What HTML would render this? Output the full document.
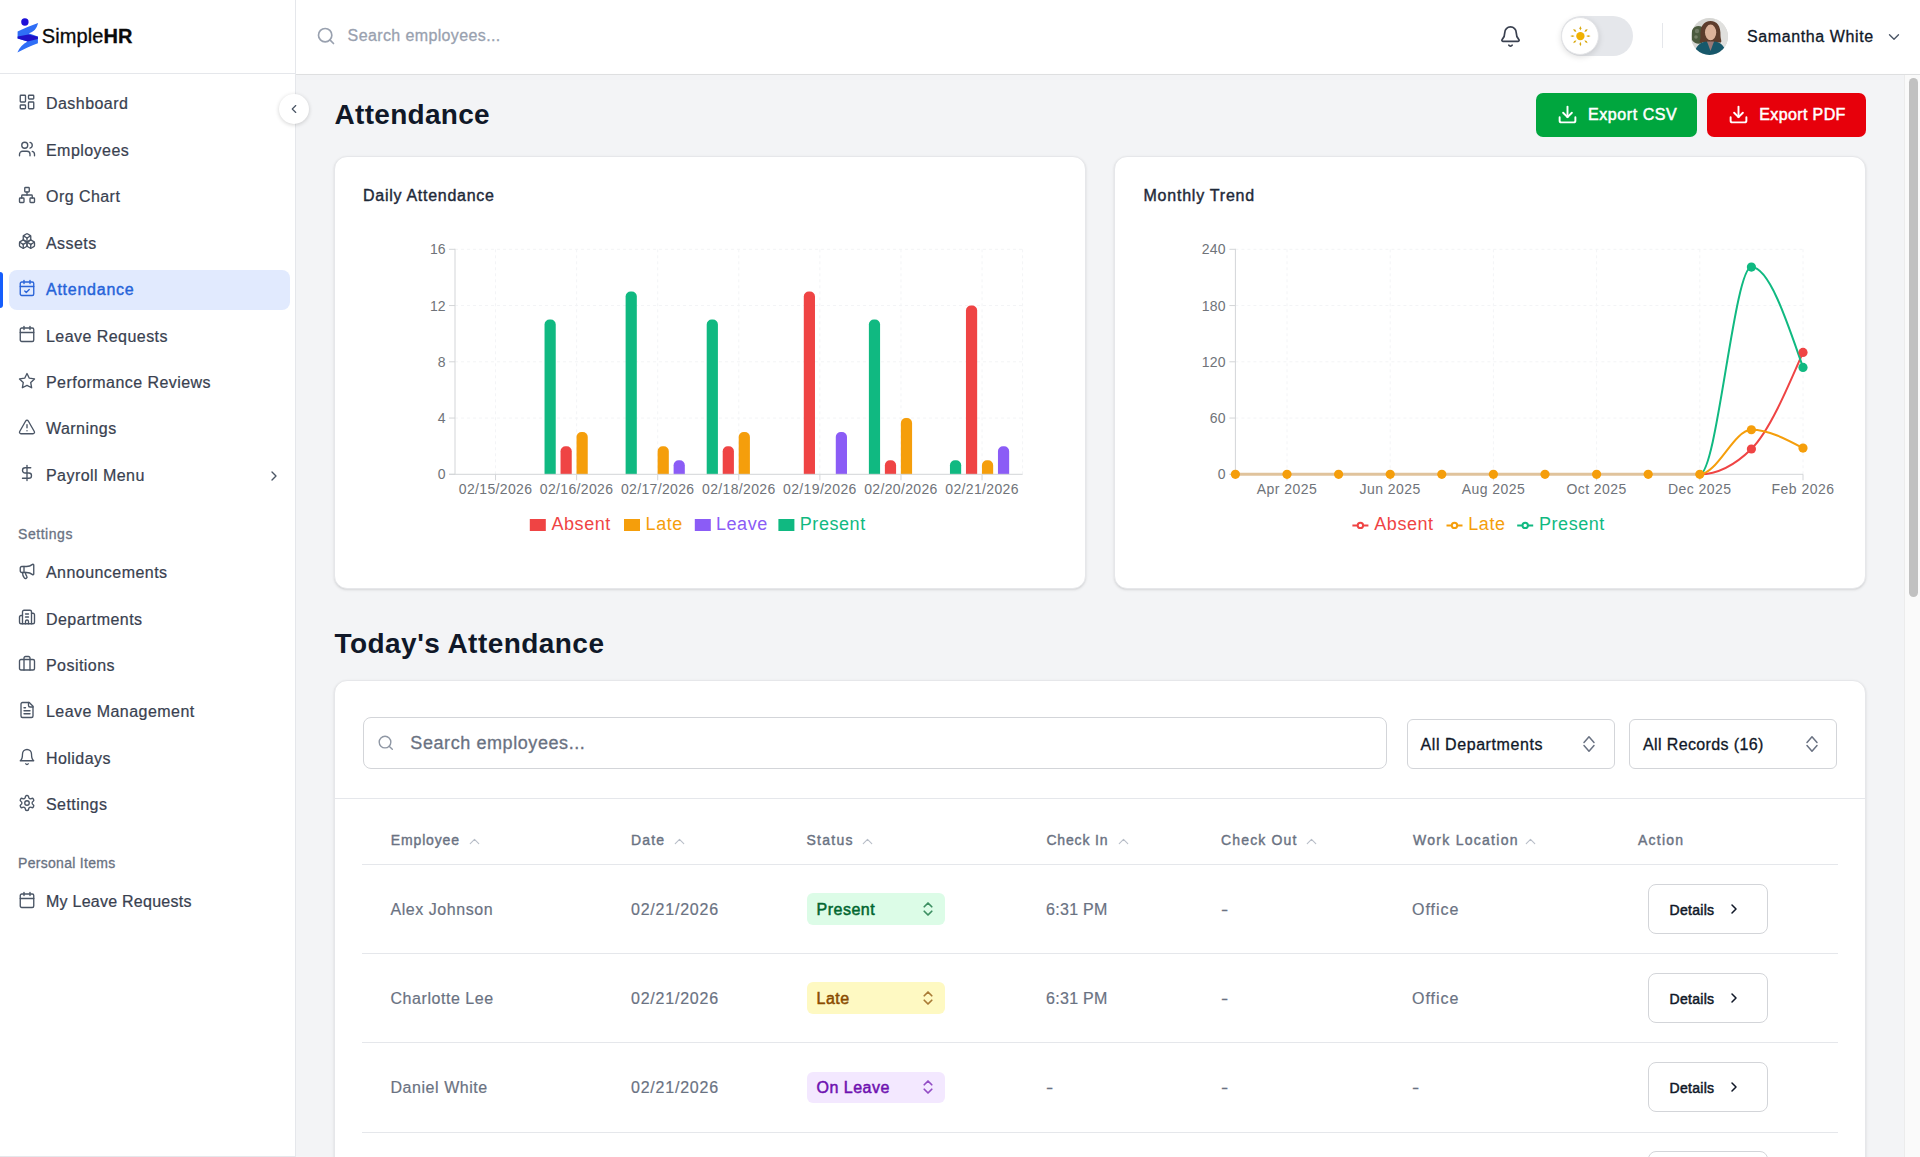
<!DOCTYPE html>
<html><head><meta charset="utf-8"><title>Attendance - SimpleHR</title>
<style>
html,body{margin:0;padding:0;width:1920px;height:1157px;overflow:hidden;background:#f3f4f6;}
body{position:relative;font-family:"Liberation Sans", sans-serif;}
.t{position:absolute;white-space:nowrap;-webkit-text-stroke:0.3px currentColor;}
svg{overflow:visible;}
</style></head><body>
<div style="position:absolute;left:0px;top:0px;width:295px;height:1157px;background:#fff;"></div>
<div style="position:absolute;left:295px;top:0px;width:1px;height:1157px;background:#e5e7eb;"></div>
<div style="position:absolute;left:0px;top:73px;width:295px;height:1px;background:#e5e7eb;"></div>
<div style="position:absolute;left:0px;top:1156px;width:295px;height:1px;background:#e5e7eb;"></div>
<svg style="position:absolute;left:0;top:0" width="50" height="60" viewBox="0 0 50 60">
<circle cx="24.9" cy="22" r="3.7" fill="#1d0fd8"/>
<path d="M17.6,31.5 C24,28.5 31,25.2 38.1,22.9 C36.6,28.8 33.6,32 28.7,33.2 L37.9,36.6 L37.9,43.2 C31,46 24,48.8 17.4,52.6 C19.5,47.5 23,43.8 27.6,41.5 L17.6,38.6 Z" fill="#2f6ef6"/>
<path d="M17.6,36.6 L28.6,34.4 L37.9,36.8 L37.9,38.9 L27.6,41.5 L17.6,38.6 Z" fill="#1f12c8"/>
</svg>
<div class="t" style="left:41.80px;top:26.27px;font-size:20px;line-height:20px;font-weight:400;color:#0a0a0a;letter-spacing:0.100px;">Simple<b style="font-weight:700">HR</b></div>
<div style="position:absolute;left:9px;top:269.5px;width:281px;height:40.5px;background:#e1eafe;border-radius:8px;"></div>
<div style="position:absolute;left:0px;top:272px;width:3px;height:36px;background:#155dfc;border-radius:0 4px 4px 0;"></div>
<svg style="position:absolute;left:17.6px;top:93.1px;" width="18" height="18" viewBox="0 0 24 24" fill="none" stroke="#4a5565" stroke-width="1.8" stroke-linecap="round" stroke-linejoin="round"><rect width="7" height="9" x="3" y="3" rx="1"/><rect width="7" height="5" x="14" y="3" rx="1"/><rect width="7" height="9" x="14" y="12" rx="1"/><rect width="7" height="5" x="3" y="16" rx="1"/></svg>
<div class="t" style="left:46.00px;top:96.46px;font-size:16px;line-height:16px;font-weight:400;color:#394150;letter-spacing:0.450px;-webkit-text-stroke:0.22px currentColor;">Dashboard</div>
<svg style="position:absolute;left:17.6px;top:139.51px;" width="18" height="18" viewBox="0 0 24 24" fill="none" stroke="#4a5565" stroke-width="1.8" stroke-linecap="round" stroke-linejoin="round"><path d="M16 21v-2a4 4 0 0 0-4-4H6a4 4 0 0 0-4 4v2"/><circle cx="9" cy="7" r="4"/><path d="M22 21v-2a4 4 0 0 0-3-3.87"/><path d="M16 3.13a4 4 0 0 1 0 7.75"/></svg>
<div class="t" style="left:46.00px;top:142.87px;font-size:16px;line-height:16px;font-weight:400;color:#394150;letter-spacing:0.450px;-webkit-text-stroke:0.22px currentColor;">Employees</div>
<svg style="position:absolute;left:17.6px;top:185.92px;" width="18" height="18" viewBox="0 0 24 24" fill="none" stroke="#4a5565" stroke-width="1.8" stroke-linecap="round" stroke-linejoin="round"><rect x="16" y="16" width="6" height="6" rx="1"/><rect x="2" y="16" width="6" height="6" rx="1"/><rect x="9" y="2" width="6" height="6" rx="1"/><path d="M5 16v-3a1 1 0 0 1 1-1h12a1 1 0 0 1 1 1v3"/><path d="M12 12V8"/></svg>
<div class="t" style="left:46.00px;top:189.28px;font-size:16px;line-height:16px;font-weight:400;color:#394150;letter-spacing:0.450px;-webkit-text-stroke:0.22px currentColor;">Org Chart</div>
<svg style="position:absolute;left:17.6px;top:232.32999999999998px;" width="18" height="18" viewBox="0 0 24 24" fill="none" stroke="#4a5565" stroke-width="1.8" stroke-linecap="round" stroke-linejoin="round"><path d="M2.97 12.92A2 2 0 0 0 2 14.63v3.24a2 2 0 0 0 .97 1.71l3 1.8a2 2 0 0 0 2.06 0L12 19v-5.5l-5-3-4.03 2.42Z"/><path d="m7 16.5-4.74-2.85"/><path d="m7 16.5 5-3"/><path d="M7 16.5v5.17"/><path d="M12 13.5V19l3.97 2.38a2 2 0 0 0 2.06 0l3-1.8a2 2 0 0 0 .97-1.71v-3.24a2 2 0 0 0-.97-1.71L17 10.5l-5 3Z"/><path d="m17 16.5-5-3"/><path d="m17 16.5 4.74-2.85"/><path d="M17 16.5v5.17"/><path d="M7.97 4.42A2 2 0 0 0 7 6.13v4.37l5 3 5-3V6.13a2 2 0 0 0-.97-1.71l-3-1.8a2 2 0 0 0-2.06 0l-3 1.8Z"/><path d="M12 8 7.26 5.15"/><path d="m12 8 4.74-2.85"/><path d="M12 13.5V8"/></svg>
<div class="t" style="left:46.00px;top:235.69px;font-size:16px;line-height:16px;font-weight:400;color:#394150;letter-spacing:0.450px;-webkit-text-stroke:0.22px currentColor;">Assets</div>
<svg style="position:absolute;left:17.6px;top:278.74px;" width="18" height="18" viewBox="0 0 24 24" fill="none" stroke="#2a64d8" stroke-width="1.8" stroke-linecap="round" stroke-linejoin="round"><path d="M8 2v4"/><path d="M16 2v4"/><rect width="18" height="18" x="3" y="4" rx="2"/><path d="M3 10h18"/><path d="m9 16 2 2 4-4"/></svg>
<div class="t" style="left:46.00px;top:282.10px;font-size:16px;line-height:16px;font-weight:400;color:#2563d9;letter-spacing:0.750px;-webkit-text-stroke:0.5px currentColor;-webkit-text-stroke:0.4px currentColor;">Attendance</div>
<svg style="position:absolute;left:17.6px;top:325.15px;" width="18" height="18" viewBox="0 0 24 24" fill="none" stroke="#4a5565" stroke-width="1.8" stroke-linecap="round" stroke-linejoin="round"><path d="M8 2v4"/><path d="M16 2v4"/><rect width="18" height="18" x="3" y="4" rx="2"/><path d="M3 10h18"/></svg>
<div class="t" style="left:46.00px;top:328.51px;font-size:16px;line-height:16px;font-weight:400;color:#394150;letter-spacing:0.450px;-webkit-text-stroke:0.22px currentColor;">Leave Requests</div>
<svg style="position:absolute;left:17.6px;top:371.56px;" width="18" height="18" viewBox="0 0 24 24" fill="none" stroke="#4a5565" stroke-width="1.8" stroke-linecap="round" stroke-linejoin="round"><polygon points="12 2 15.09 8.26 22 9.27 17 14.14 18.18 21.02 12 17.77 5.82 21.02 7 14.14 2 9.27 8.91 8.26 12 2"/></svg>
<div class="t" style="left:46.00px;top:374.92px;font-size:16px;line-height:16px;font-weight:400;color:#394150;letter-spacing:0.450px;-webkit-text-stroke:0.22px currentColor;">Performance Reviews</div>
<svg style="position:absolute;left:17.6px;top:417.97px;" width="18" height="18" viewBox="0 0 24 24" fill="none" stroke="#4a5565" stroke-width="1.8" stroke-linecap="round" stroke-linejoin="round"><path d="m21.73 18-8-14a2 2 0 0 0-3.48 0l-8 14A2 2 0 0 0 4 21h16a2 2 0 0 0 1.73-3"/><path d="M12 9v4"/><path d="M12 17h.01"/></svg>
<div class="t" style="left:46.00px;top:421.33px;font-size:16px;line-height:16px;font-weight:400;color:#394150;letter-spacing:0.450px;-webkit-text-stroke:0.22px currentColor;">Warnings</div>
<svg style="position:absolute;left:17.6px;top:464.38px;" width="18" height="18" viewBox="0 0 24 24" fill="none" stroke="#4a5565" stroke-width="1.8" stroke-linecap="round" stroke-linejoin="round"><line x1="12" x2="12" y1="2" y2="22"/><path d="M17 5H9.5a3.5 3.5 0 0 0 0 7h5a3.5 3.5 0 0 1 0 7H6"/></svg>
<div class="t" style="left:46.00px;top:467.74px;font-size:16px;line-height:16px;font-weight:400;color:#394150;letter-spacing:0.450px;-webkit-text-stroke:0.22px currentColor;">Payroll Menu</div>
<svg style="position:absolute;left:266px;top:468px;" width="16" height="16" viewBox="0 0 24 24" fill="none" stroke="#4a5565" stroke-width="2" stroke-linecap="round" stroke-linejoin="round"><path d="m9 18 6-6-6-6"/></svg>
<div class="t" style="left:18.00px;top:526.75px;font-size:14px;line-height:14px;font-weight:400;color:#6a7282;letter-spacing:0.550px;">Settings</div>
<svg style="position:absolute;left:17.6px;top:561.9px;" width="18" height="18" viewBox="0 0 24 24" fill="none" stroke="#4a5565" stroke-width="1.8" stroke-linecap="round" stroke-linejoin="round"><path d="M11 6a13 13 0 0 0 8.4-2.8A1 1 0 0 1 21 4v12a1 1 0 0 1-1.6.8A13 13 0 0 0 11 14H5a2 2 0 0 1-2-2V8a2 2 0 0 1 2-2z"/><path d="M6 14a12 12 0 0 0 2.4 7.2 2 2 0 0 0 3.2-2.4A8 8 0 0 1 10 14"/><path d="M8 6v8"/></svg>
<div class="t" style="left:46.00px;top:565.26px;font-size:16px;line-height:16px;font-weight:400;color:#394150;letter-spacing:0.450px;-webkit-text-stroke:0.22px currentColor;">Announcements</div>
<svg style="position:absolute;left:17.6px;top:608.3px;" width="18" height="18" viewBox="0 0 24 24" fill="none" stroke="#4a5565" stroke-width="1.8" stroke-linecap="round" stroke-linejoin="round"><path d="M10 12h4"/><path d="M10 8h4"/><path d="M14 21v-3a2 2 0 0 0-4 0v3"/><path d="M6 10H4a2 2 0 0 0-2 2v7a2 2 0 0 0 2 2h16a2 2 0 0 0 2-2V9a2 2 0 0 0-2-2h-2"/><path d="M6 21V5a2 2 0 0 1 2-2h8a2 2 0 0 1 2 2v16"/></svg>
<div class="t" style="left:46.00px;top:611.66px;font-size:16px;line-height:16px;font-weight:400;color:#394150;letter-spacing:0.450px;-webkit-text-stroke:0.22px currentColor;">Departments</div>
<svg style="position:absolute;left:17.6px;top:654.6999999999999px;" width="18" height="18" viewBox="0 0 24 24" fill="none" stroke="#4a5565" stroke-width="1.8" stroke-linecap="round" stroke-linejoin="round"><path d="M16 20V4a2 2 0 0 0-2-2h-4a2 2 0 0 0-2 2v16"/><rect width="20" height="14" x="2" y="6" rx="2"/></svg>
<div class="t" style="left:46.00px;top:658.06px;font-size:16px;line-height:16px;font-weight:400;color:#394150;letter-spacing:0.450px;-webkit-text-stroke:0.22px currentColor;">Positions</div>
<svg style="position:absolute;left:17.6px;top:701.1px;" width="18" height="18" viewBox="0 0 24 24" fill="none" stroke="#4a5565" stroke-width="1.8" stroke-linecap="round" stroke-linejoin="round"><path d="M15 2H6a2 2 0 0 0-2 2v16a2 2 0 0 0 2 2h12a2 2 0 0 0 2-2V7Z"/><path d="M14 2v4a2 2 0 0 0 2 2h4"/><path d="M10 9H8"/><path d="M16 13H8"/><path d="M16 17H8"/></svg>
<div class="t" style="left:46.00px;top:704.46px;font-size:16px;line-height:16px;font-weight:400;color:#394150;letter-spacing:0.450px;-webkit-text-stroke:0.22px currentColor;">Leave Management</div>
<svg style="position:absolute;left:17.6px;top:747.5px;" width="18" height="18" viewBox="0 0 24 24" fill="none" stroke="#4a5565" stroke-width="1.8" stroke-linecap="round" stroke-linejoin="round"><path d="M6 8a6 6 0 0 1 12 0c0 7 3 9 3 9H3s3-2 3-9"/><path d="M10.3 21a1.94 1.94 0 0 0 3.4 0"/></svg>
<div class="t" style="left:46.00px;top:750.86px;font-size:16px;line-height:16px;font-weight:400;color:#394150;letter-spacing:0.450px;-webkit-text-stroke:0.22px currentColor;">Holidays</div>
<svg style="position:absolute;left:17.6px;top:793.9px;" width="18" height="18" viewBox="0 0 24 24" fill="none" stroke="#4a5565" stroke-width="1.8" stroke-linecap="round" stroke-linejoin="round"><path d="M12.22 2h-.44a2 2 0 0 0-2 2v.18a2 2 0 0 1-1 1.73l-.43.25a2 2 0 0 1-2 0l-.15-.08a2 2 0 0 0-2.73.73l-.22.38a2 2 0 0 0 .73 2.73l.15.1a2 2 0 0 1 1 1.72v.51a2 2 0 0 1-1 1.74l-.15.09a2 2 0 0 0-.73 2.73l.22.38a2 2 0 0 0 2.73.73l.15-.08a2 2 0 0 1 2 0l.43.25a2 2 0 0 1 1 1.73V20a2 2 0 0 0 2 2h.44a2 2 0 0 0 2-2v-.18a2 2 0 0 1 1-1.73l.43-.25a2 2 0 0 1 2 0l.15.08a2 2 0 0 0 2.73-.73l.22-.39a2 2 0 0 0-.73-2.73l-.15-.08a2 2 0 0 1-1-1.74v-.5a2 2 0 0 1 1-1.74l.15-.09a2 2 0 0 0 .73-2.73l-.22-.38a2 2 0 0 0-2.73-.73l-.15.08a2 2 0 0 1-2 0l-.43-.25a2 2 0 0 1-1-1.73V4a2 2 0 0 0-2-2z"/><circle cx="12" cy="12" r="3"/></svg>
<div class="t" style="left:46.00px;top:797.26px;font-size:16px;line-height:16px;font-weight:400;color:#394150;letter-spacing:0.450px;-webkit-text-stroke:0.22px currentColor;">Settings</div>
<div class="t" style="left:18.00px;top:855.65px;font-size:14px;line-height:14px;font-weight:400;color:#6a7282;letter-spacing:0.300px;">Personal Items</div>
<svg style="position:absolute;left:17.6px;top:891.1px;" width="18" height="18" viewBox="0 0 24 24" fill="none" stroke="#4a5565" stroke-width="1.8" stroke-linecap="round" stroke-linejoin="round"><path d="M8 2v4"/><path d="M16 2v4"/><rect width="18" height="18" x="3" y="4" rx="2"/><path d="M3 10h18"/></svg>
<div class="t" style="left:46.00px;top:894.46px;font-size:16px;line-height:16px;font-weight:400;color:#394150;letter-spacing:0.250px;-webkit-text-stroke:0.22px currentColor;">My Leave Requests</div>
<div style="position:absolute;left:296px;top:0px;width:1624px;height:74px;background:#fff;"></div>
<svg style="position:absolute;left:316px;top:26px;" width="20" height="20" viewBox="0 0 24 24" fill="none" stroke="#99a1af" stroke-width="2" stroke-linecap="round" stroke-linejoin="round"><circle cx="11" cy="11" r="8"/><path d="m21 21-4.3-4.3"/></svg>
<div class="t" style="left:347.60px;top:28.46px;font-size:16px;line-height:16px;font-weight:400;color:#99a1af;letter-spacing:0.380px;">Search employees...</div>
<svg style="position:absolute;left:1499.25px;top:24.75px;" width="23" height="23" viewBox="0 0 24 24" fill="none" stroke="#3a4150" stroke-width="1.8" stroke-linecap="round" stroke-linejoin="round"><path d="M10.268 21a2 2 0 0 0 3.464 0"/><path d="M3.262 15.326A1 1 0 0 0 4 17h16a1 1 0 0 0 .74-1.673C19.41 13.956 18 12.499 18 8A6 6 0 0 0 6 8c0 4.499-1.411 5.956-2.738 7.326"/></svg>
<div style="position:absolute;left:1561px;top:16px;width:72px;height:40px;background:#e5e7eb;border-radius:20px;"></div>
<div style="position:absolute;left:1561px;top:17px;width:38px;height:38px;background:#fff;border-radius:50%;border:1px solid #e3e4e7;box-sizing:border-box;box-shadow:0 2px 6px rgba(0,0,0,0.13);"></div>
<svg style="position:absolute;left:1560px;top:14px" width="40" height="44" viewBox="0 0 40 44"><polygon points="26.10,22.10 28.30,23.05 30.60,22.10 28.30,21.15" fill="#d9a90f"/><polygon points="24.43,26.13 25.31,28.36 27.61,29.31 26.66,27.01" fill="#d9a90f"/><polygon points="20.40,27.80 19.45,30.00 20.40,32.30 21.35,30.00" fill="#d9a90f"/><polygon points="16.37,26.13 14.14,27.01 13.19,29.31 15.49,28.36" fill="#d9a90f"/><polygon points="14.70,22.10 12.50,21.15 10.20,22.10 12.50,23.05" fill="#d9a90f"/><polygon points="16.37,18.07 15.49,15.84 13.19,14.89 14.14,17.19" fill="#d9a90f"/><polygon points="20.40,16.40 21.35,14.20 20.40,11.90 19.45,14.20" fill="#d9a90f"/><polygon points="24.43,18.07 26.66,17.19 27.61,14.89 25.31,15.84" fill="#d9a90f"/><circle cx="20.4" cy="22.1" r="4.2" fill="#f0b100"/></svg>
<div style="position:absolute;left:1662px;top:23px;width:1px;height:25px;background:#e5e7eb;"></div>
<svg style="position:absolute;left:1690.5px;top:17.5px" width="37" height="37" viewBox="0 0 37 37">
<defs><clipPath id="av"><circle cx="18.5" cy="18.5" r="18.5"/></clipPath></defs>
<g clip-path="url(#av)">
<rect width="37" height="37" fill="#d6d6d3"/>
<rect x="24" width="13" height="37" fill="#e0e0de"/>
<path d="M1 12 C3 8 8 7 11 9 C12.5 13 12 20 11 25 C7 27 3 25 1 22Z" fill="#4b5a3e"/>
<circle cx="6" cy="13" r="2.2" fill="#6f7a63"/>
<circle cx="5" cy="19" r="1.8" fill="#768068"/>
<path d="M9.5 19 C8.5 8 13 3 19.5 3 C26 3 30 8 29.5 18 C29.5 21 31 23 30 24.5 L9 24.5 C8 22.5 9.8 21 9.5 19Z" fill="#5d3c2c"/>
<ellipse cx="19.6" cy="14.4" rx="5.6" ry="7.8" fill="#dcb29a"/>
<path d="M3 37 C4.5 28 9 24.5 15 23.5 L19.5 25.5 L24 23.5 C30 24.5 34 28 35.5 37Z" fill="#17586b"/>
<path d="M16 23.5 L19.5 33 L23 23.5Z" fill="#9a7a78"/>
</g></svg>
<div class="t" style="left:1747.00px;top:28.56px;font-size:16px;line-height:16px;font-weight:400;color:#101828;letter-spacing:0.600px;">Samantha White</div>
<svg style="position:absolute;left:1884.5px;top:27.5px;" width="18" height="18" viewBox="0 0 24 24" fill="none" stroke="#4a5565" stroke-width="1.8" stroke-linecap="round" stroke-linejoin="round"><path d="m6 9 6 6 6-6"/></svg>
<div style="position:absolute;left:296px;top:74px;width:1609px;height:1083px;background:#f3f4f6;"></div>
<div style="position:absolute;left:1904px;top:74px;width:16px;height:1083px;background:#fafafa;border-left:1px solid #ececec;box-sizing:border-box;"></div>
<div style="position:absolute;left:1908.5px;top:77.5px;width:9px;height:519px;background:#c1c1c1;border-radius:5px;"></div>
<div style="position:absolute;left:296px;top:74px;width:1624px;height:1px;background:#dedfe0;box-shadow:0 2px 6px rgba(0,0,0,0.06);"></div>
<div style="position:absolute;left:279px;top:94px;width:30px;height:30px;background:#fff;border-radius:50%;box-shadow:0 1px 4px rgba(0,0,0,0.18);"></div>
<svg style="position:absolute;left:287px;top:102px;" width="14" height="14" viewBox="0 0 24 24" fill="none" stroke="#4a5565" stroke-width="2" stroke-linecap="round" stroke-linejoin="round"><path d="m15 18-6-6 6-6"/></svg>
<div class="t" style="left:334.50px;top:100.50px;font-size:28px;line-height:28px;font-weight:700;color:#101828;letter-spacing:0.300px;-webkit-text-stroke:0;">Attendance</div>
<div style="position:absolute;left:1536px;top:93px;width:161px;height:44px;background:#00a63e;border-radius:7px;"></div>
<svg style="position:absolute;left:1557px;top:104px;" width="21" height="21" viewBox="0 0 24 24" fill="none" stroke="#fff" stroke-width="2.2" stroke-linecap="round" stroke-linejoin="round"><path d="M21 15v4a2 2 0 0 1-2 2H5a2 2 0 0 1-2-2v-4"/><polyline points="7 10 12 15 17 10"/><line x1="12" x2="12" y1="15" y2="3"/></svg>
<div class="t" style="left:1588.00px;top:106.96px;font-size:16px;line-height:16px;font-weight:400;color:#fff;letter-spacing:0.570px;-webkit-text-stroke:0.5px currentColor;">Export CSV</div>
<div style="position:absolute;left:1706.5px;top:93px;width:159.5px;height:44px;background:#e7000b;border-radius:7px;"></div>
<svg style="position:absolute;left:1728px;top:104px;" width="21" height="21" viewBox="0 0 24 24" fill="none" stroke="#fff" stroke-width="2.2" stroke-linecap="round" stroke-linejoin="round"><path d="M21 15v4a2 2 0 0 1-2 2H5a2 2 0 0 1-2-2v-4"/><polyline points="7 10 12 15 17 10"/><line x1="12" x2="12" y1="15" y2="3"/></svg>
<div class="t" style="left:1759.20px;top:106.96px;font-size:16px;line-height:16px;font-weight:400;color:#fff;letter-spacing:0.390px;-webkit-text-stroke:0.5px currentColor;">Export PDF</div>
<div style="position:absolute;left:334px;top:156px;width:752px;height:433px;background:#fff;border-radius:13px;border:1px solid #e6e7ea;box-sizing:border-box;box-shadow:0 1px 3px rgba(0,0,0,0.1),0 1px 2px -1px rgba(0,0,0,0.1);"></div>
<div style="position:absolute;left:1114px;top:156px;width:752px;height:433px;background:#fff;border-radius:13px;border:1px solid #e6e7ea;box-sizing:border-box;box-shadow:0 1px 3px rgba(0,0,0,0.1),0 1px 2px -1px rgba(0,0,0,0.1);"></div>
<div class="t" style="left:363.00px;top:187.86px;font-size:16px;line-height:16px;font-weight:400;color:#1e2939;letter-spacing:0.720px;-webkit-text-stroke:0.5px currentColor;-webkit-text-stroke:0.4px currentColor;">Daily Attendance</div>
<div class="t" style="left:1143.50px;top:187.86px;font-size:16px;line-height:16px;font-weight:400;color:#1e2939;letter-spacing:0.770px;-webkit-text-stroke:0.5px currentColor;-webkit-text-stroke:0.4px currentColor;">Monthly Trend</div>
<div class="t" style="left:334.50px;top:630.30px;font-size:28px;line-height:28px;font-weight:700;color:#101828;letter-spacing:0.450px;-webkit-text-stroke:0;">Today's Attendance</div>
<div style="position:absolute;left:334px;top:680px;width:1532px;height:600px;background:#fff;border-radius:13px;border:1px solid #e6e7ea;box-sizing:border-box;box-shadow:0 1px 3px rgba(0,0,0,0.1),0 1px 2px -1px rgba(0,0,0,0.1);"></div>
<div style="position:absolute;left:362.5px;top:716.5px;width:1024px;height:52.5px;border:1px solid #d3d5d9;border-radius:8px;box-sizing:border-box;"></div>
<svg style="position:absolute;left:376.5px;top:734px;" width="17.5" height="17.5" viewBox="0 0 24 24" fill="none" stroke="#8f97a4" stroke-width="1.9" stroke-linecap="round" stroke-linejoin="round"><circle cx="11" cy="11" r="8"/><path d="m21 21-4.3-4.3"/></svg>
<div class="t" style="left:410.30px;top:733.96px;font-size:18px;line-height:18px;font-weight:400;color:#6a7282;letter-spacing:0.580px;">Search employees...</div>
<div style="position:absolute;left:1406.5px;top:719px;width:208px;height:50px;border:1px solid #d3d5d9;border-radius:6px;box-sizing:border-box;"></div>
<div class="t" style="left:1420.50px;top:736.86px;font-size:16px;line-height:16px;font-weight:400;color:#101828;letter-spacing:0.580px;">All Departments</div>
<svg style="position:absolute;left:1577.0px;top:731.9px;" width="24" height="24" viewBox="0 0 24 24" fill="none" stroke="#6a7282" stroke-width="1.5" stroke-linecap="round" stroke-linejoin="round"><path d="M7 10.5 12 4.75l5 5.75"/><path d="M7 13.5 12 19.25l5-5.75"/></svg>
<div style="position:absolute;left:1629px;top:719px;width:208px;height:50px;border:1px solid #d3d5d9;border-radius:6px;box-sizing:border-box;"></div>
<div class="t" style="left:1643.00px;top:736.86px;font-size:16px;line-height:16px;font-weight:400;color:#101828;letter-spacing:0.370px;">All Records (16)</div>
<svg style="position:absolute;left:1799.5px;top:731.9px;" width="24" height="24" viewBox="0 0 24 24" fill="none" stroke="#6a7282" stroke-width="1.5" stroke-linecap="round" stroke-linejoin="round"><path d="M7 10.5 12 4.75l5 5.75"/><path d="M7 13.5 12 19.25l5-5.75"/></svg>
<div style="position:absolute;left:335px;top:797.5px;width:1530px;height:1px;background:#e5e7eb;"></div>
<div class="t" style="left:390.80px;top:833.15px;font-size:14px;line-height:14px;font-weight:400;color:#6a7282;letter-spacing:0.850px;-webkit-text-stroke:0.5px currentColor;-webkit-text-stroke:0.4px currentColor;">Employee</div>
<svg style="position:absolute;left:466.0px;top:832.8px;" width="17" height="17" viewBox="0 0 24 24" fill="none" stroke="#b8bec8" stroke-width="1.6" stroke-linecap="round" stroke-linejoin="round"><path d="m18 15-6-6-6 6"/></svg>
<div class="t" style="left:631.00px;top:833.15px;font-size:14px;line-height:14px;font-weight:400;color:#6a7282;letter-spacing:1.180px;-webkit-text-stroke:0.5px currentColor;-webkit-text-stroke:0.4px currentColor;">Date</div>
<svg style="position:absolute;left:670.8px;top:832.8px;" width="17" height="17" viewBox="0 0 24 24" fill="none" stroke="#b8bec8" stroke-width="1.6" stroke-linecap="round" stroke-linejoin="round"><path d="m18 15-6-6-6 6"/></svg>
<div class="t" style="left:806.50px;top:833.15px;font-size:14px;line-height:14px;font-weight:400;color:#6a7282;letter-spacing:1.250px;-webkit-text-stroke:0.5px currentColor;-webkit-text-stroke:0.4px currentColor;">Status</div>
<svg style="position:absolute;left:859.3px;top:832.8px;" width="17" height="17" viewBox="0 0 24 24" fill="none" stroke="#b8bec8" stroke-width="1.6" stroke-linecap="round" stroke-linejoin="round"><path d="m18 15-6-6-6 6"/></svg>
<div class="t" style="left:1046.40px;top:833.15px;font-size:14px;line-height:14px;font-weight:400;color:#6a7282;letter-spacing:0.850px;-webkit-text-stroke:0.5px currentColor;-webkit-text-stroke:0.4px currentColor;">Check In</div>
<svg style="position:absolute;left:1115.1px;top:832.8px;" width="17" height="17" viewBox="0 0 24 24" fill="none" stroke="#b8bec8" stroke-width="1.6" stroke-linecap="round" stroke-linejoin="round"><path d="m18 15-6-6-6 6"/></svg>
<div class="t" style="left:1221.00px;top:833.15px;font-size:14px;line-height:14px;font-weight:400;color:#6a7282;letter-spacing:1.160px;-webkit-text-stroke:0.5px currentColor;-webkit-text-stroke:0.4px currentColor;">Check Out</div>
<svg style="position:absolute;left:1302.6px;top:832.8px;" width="17" height="17" viewBox="0 0 24 24" fill="none" stroke="#b8bec8" stroke-width="1.6" stroke-linecap="round" stroke-linejoin="round"><path d="m18 15-6-6-6 6"/></svg>
<div class="t" style="left:1413.00px;top:833.15px;font-size:14px;line-height:14px;font-weight:400;color:#6a7282;letter-spacing:1.270px;-webkit-text-stroke:0.5px currentColor;-webkit-text-stroke:0.4px currentColor;">Work Location</div>
<svg style="position:absolute;left:1522.3px;top:832.8px;" width="17" height="17" viewBox="0 0 24 24" fill="none" stroke="#b8bec8" stroke-width="1.6" stroke-linecap="round" stroke-linejoin="round"><path d="m18 15-6-6-6 6"/></svg>
<div class="t" style="left:1638.00px;top:833.15px;font-size:14px;line-height:14px;font-weight:400;color:#6a7282;letter-spacing:1.250px;-webkit-text-stroke:0.5px currentColor;-webkit-text-stroke:0.4px currentColor;">Action</div>
<div style="position:absolute;left:362px;top:863.5px;width:1476px;height:1px;background:#e5e7eb;"></div>
<div class="t" style="left:390.50px;top:901.66px;font-size:16px;line-height:16px;font-weight:400;color:#6a7282;letter-spacing:0.550px;-webkit-text-stroke:0.2px currentColor;">Alex Johnson</div>
<div class="t" style="left:631.00px;top:901.66px;font-size:16px;line-height:16px;font-weight:400;color:#6a7282;letter-spacing:0.780px;-webkit-text-stroke:0.2px currentColor;">02/21/2026</div>
<div style="position:absolute;left:807px;top:893.2px;width:138px;height:31.5px;background:#dcfce7;border-radius:6px;"></div>
<div class="t" style="left:816.50px;top:901.66px;font-size:16px;line-height:16px;font-weight:400;color:#016630;letter-spacing:0.500px;-webkit-text-stroke:0.5px currentColor;">Present</div>
<svg style="position:absolute;left:915.5px;top:896.6px;opacity:0.72;" width="24" height="24" viewBox="0 0 24 24" fill="none" stroke="#016630" stroke-width="1.7" stroke-linecap="round" stroke-linejoin="round"><path d="M8.25 9.75 12 6l3.75 3.75"/><path d="M8.25 14.25 12 18l3.75-3.75"/></svg>
<div class="t" style="left:1046.00px;top:901.66px;font-size:16px;line-height:16px;font-weight:400;color:#6a7282;letter-spacing:0.300px;-webkit-text-stroke:0.2px currentColor;">6:31 PM</div>
<div class="t" style="left:1221.00px;top:901.66px;font-size:16px;line-height:16px;font-weight:400;color:#6a7282;-webkit-text-stroke:0.2px currentColor;transform:scaleX(1.35);transform-origin:left;">-</div>
<div class="t" style="left:1412.00px;top:901.66px;font-size:16px;line-height:16px;font-weight:400;color:#6a7282;letter-spacing:1.000px;-webkit-text-stroke:0.2px currentColor;">Office</div>
<div style="position:absolute;left:1647.5px;top:883.5px;width:120.5px;height:50.5px;background:#fff;border:1px solid #d3d5d9;border-radius:8px;box-sizing:border-box;"></div>
<div class="t" style="left:1669.50px;top:902.85px;font-size:14px;line-height:14px;font-weight:400;color:#101828;letter-spacing:0.300px;-webkit-text-stroke:0.5px currentColor;">Details</div>
<svg style="position:absolute;left:1726.25px;top:900.75px;" width="16" height="16" viewBox="0 0 24 24" fill="none" stroke="#101828" stroke-width="2.3" stroke-linecap="round" stroke-linejoin="round"><path d="m9 18 6-6-6-6"/></svg>
<div style="position:absolute;left:362px;top:953.2px;width:1476px;height:1px;background:#e5e7eb;"></div>
<div class="t" style="left:390.50px;top:990.86px;font-size:16px;line-height:16px;font-weight:400;color:#6a7282;letter-spacing:0.550px;-webkit-text-stroke:0.2px currentColor;">Charlotte Lee</div>
<div class="t" style="left:631.00px;top:990.86px;font-size:16px;line-height:16px;font-weight:400;color:#6a7282;letter-spacing:0.780px;-webkit-text-stroke:0.2px currentColor;">02/21/2026</div>
<div style="position:absolute;left:807px;top:982.4000000000001px;width:138px;height:31.5px;background:#fef9c2;border-radius:6px;"></div>
<div class="t" style="left:816.50px;top:990.86px;font-size:16px;line-height:16px;font-weight:400;color:#894b00;letter-spacing:0.500px;-webkit-text-stroke:0.5px currentColor;">Late</div>
<svg style="position:absolute;left:915.5px;top:985.8000000000001px;opacity:0.72;" width="24" height="24" viewBox="0 0 24 24" fill="none" stroke="#894b00" stroke-width="1.7" stroke-linecap="round" stroke-linejoin="round"><path d="M8.25 9.75 12 6l3.75 3.75"/><path d="M8.25 14.25 12 18l3.75-3.75"/></svg>
<div class="t" style="left:1046.00px;top:990.86px;font-size:16px;line-height:16px;font-weight:400;color:#6a7282;letter-spacing:0.300px;-webkit-text-stroke:0.2px currentColor;">6:31 PM</div>
<div class="t" style="left:1221.00px;top:990.86px;font-size:16px;line-height:16px;font-weight:400;color:#6a7282;-webkit-text-stroke:0.2px currentColor;transform:scaleX(1.35);transform-origin:left;">-</div>
<div class="t" style="left:1412.00px;top:990.86px;font-size:16px;line-height:16px;font-weight:400;color:#6a7282;letter-spacing:1.000px;-webkit-text-stroke:0.2px currentColor;">Office</div>
<div style="position:absolute;left:1647.5px;top:972.7px;width:120.5px;height:50.5px;background:#fff;border:1px solid #d3d5d9;border-radius:8px;box-sizing:border-box;"></div>
<div class="t" style="left:1669.50px;top:992.05px;font-size:14px;line-height:14px;font-weight:400;color:#101828;letter-spacing:0.300px;-webkit-text-stroke:0.5px currentColor;">Details</div>
<svg style="position:absolute;left:1726.25px;top:989.95px;" width="16" height="16" viewBox="0 0 24 24" fill="none" stroke="#101828" stroke-width="2.3" stroke-linecap="round" stroke-linejoin="round"><path d="m9 18 6-6-6-6"/></svg>
<div style="position:absolute;left:362px;top:1042.4px;width:1476px;height:1px;background:#e5e7eb;"></div>
<div class="t" style="left:390.50px;top:1080.06px;font-size:16px;line-height:16px;font-weight:400;color:#6a7282;letter-spacing:0.550px;-webkit-text-stroke:0.2px currentColor;">Daniel White</div>
<div class="t" style="left:631.00px;top:1080.06px;font-size:16px;line-height:16px;font-weight:400;color:#6a7282;letter-spacing:0.780px;-webkit-text-stroke:0.2px currentColor;">02/21/2026</div>
<div style="position:absolute;left:807px;top:1071.6000000000001px;width:138px;height:31.5px;background:#f3e8ff;border-radius:6px;"></div>
<div class="t" style="left:816.50px;top:1080.06px;font-size:16px;line-height:16px;font-weight:400;color:#6e11b0;letter-spacing:0.500px;-webkit-text-stroke:0.5px currentColor;">On Leave</div>
<svg style="position:absolute;left:915.5px;top:1075.0px;opacity:0.72;" width="24" height="24" viewBox="0 0 24 24" fill="none" stroke="#6e11b0" stroke-width="1.7" stroke-linecap="round" stroke-linejoin="round"><path d="M8.25 9.75 12 6l3.75 3.75"/><path d="M8.25 14.25 12 18l3.75-3.75"/></svg>
<div class="t" style="left:1046.00px;top:1080.06px;font-size:16px;line-height:16px;font-weight:400;color:#6a7282;letter-spacing:0.300px;-webkit-text-stroke:0.2px currentColor;transform:scaleX(1.35);transform-origin:left;">-</div>
<div class="t" style="left:1221.00px;top:1080.06px;font-size:16px;line-height:16px;font-weight:400;color:#6a7282;-webkit-text-stroke:0.2px currentColor;transform:scaleX(1.35);transform-origin:left;">-</div>
<div class="t" style="left:1412.00px;top:1080.06px;font-size:16px;line-height:16px;font-weight:400;color:#6a7282;-webkit-text-stroke:0.2px currentColor;transform:scaleX(1.35);transform-origin:left;">-</div>
<div style="position:absolute;left:1647.5px;top:1061.9px;width:120.5px;height:50.5px;background:#fff;border:1px solid #d3d5d9;border-radius:8px;box-sizing:border-box;"></div>
<div class="t" style="left:1669.50px;top:1081.25px;font-size:14px;line-height:14px;font-weight:400;color:#101828;letter-spacing:0.300px;-webkit-text-stroke:0.5px currentColor;">Details</div>
<svg style="position:absolute;left:1726.25px;top:1079.15px;" width="16" height="16" viewBox="0 0 24 24" fill="none" stroke="#101828" stroke-width="2.3" stroke-linecap="round" stroke-linejoin="round"><path d="m9 18 6-6-6-6"/></svg>
<div style="position:absolute;left:362px;top:1131.6000000000001px;width:1476px;height:1px;background:#e5e7eb;"></div>
<div style="position:absolute;left:1647.5px;top:1151.1px;width:120.5px;height:50.5px;background:#fff;border:1px solid #d3d5d9;border-radius:8px;box-sizing:border-box;"></div>
<div style="position:absolute;left:362px;top:1220.8px;width:1476px;height:1px;background:#e5e7eb;"></div>
<svg style="position:absolute;left:0;top:0" width="1920" height="1157" viewBox="0 0 1920 1157">
<line x1="455.0" y1="418.05" x2="1022.6" y2="418.05" stroke="#f3f4f6" stroke-dasharray="3 3"/>
<line x1="455.0" y1="361.80" x2="1022.6" y2="361.80" stroke="#f3f4f6" stroke-dasharray="3 3"/>
<line x1="455.0" y1="305.55" x2="1022.6" y2="305.55" stroke="#f3f4f6" stroke-dasharray="3 3"/>
<line x1="455.0" y1="249.30" x2="1022.6" y2="249.30" stroke="#f3f4f6" stroke-dasharray="3 3"/>
<line x1="495.54" y1="249.3" x2="495.54" y2="474.3" stroke="#f3f4f6" stroke-dasharray="3 3"/>
<line x1="576.63" y1="249.3" x2="576.63" y2="474.3" stroke="#f3f4f6" stroke-dasharray="3 3"/>
<line x1="657.71" y1="249.3" x2="657.71" y2="474.3" stroke="#f3f4f6" stroke-dasharray="3 3"/>
<line x1="738.80" y1="249.3" x2="738.80" y2="474.3" stroke="#f3f4f6" stroke-dasharray="3 3"/>
<line x1="819.89" y1="249.3" x2="819.89" y2="474.3" stroke="#f3f4f6" stroke-dasharray="3 3"/>
<line x1="900.97" y1="249.3" x2="900.97" y2="474.3" stroke="#f3f4f6" stroke-dasharray="3 3"/>
<line x1="982.06" y1="249.3" x2="982.06" y2="474.3" stroke="#f3f4f6" stroke-dasharray="3 3"/>
<line x1="1022.6" y1="249.3" x2="1022.6" y2="474.3" stroke="#f3f4f6" stroke-dasharray="3 3"/>
<path d="M544.54,474.3V324.61A5,5 0 0 1 549.54,319.61H550.74A5,5 0 0 1 555.74,324.61V474.3Z" fill="#10b981"/>
<path d="M560.54,474.3V451.18A5,5 0 0 1 565.54,446.18H566.74A5,5 0 0 1 571.74,451.18V474.3Z" fill="#ef4444"/>
<path d="M576.54,474.3V437.11A5,5 0 0 1 581.54,432.11H582.74A5,5 0 0 1 587.74,437.11V474.3Z" fill="#f59e0b"/>
<path d="M625.62,474.3V296.49A5,5 0 0 1 630.62,291.49H631.82A5,5 0 0 1 636.82,296.49V474.3Z" fill="#10b981"/>
<path d="M657.62,474.3V451.18A5,5 0 0 1 662.62,446.18H663.82A5,5 0 0 1 668.82,451.18V474.3Z" fill="#f59e0b"/>
<path d="M673.62,474.3V465.24A5,5 0 0 1 678.62,460.24H679.82A5,5 0 0 1 684.82,465.24V474.3Z" fill="#8b5cf6"/>
<path d="M706.71,474.3V324.61A5,5 0 0 1 711.71,319.61H712.91A5,5 0 0 1 717.91,324.61V474.3Z" fill="#10b981"/>
<path d="M722.71,474.3V451.18A5,5 0 0 1 727.71,446.18H728.91A5,5 0 0 1 733.91,451.18V474.3Z" fill="#ef4444"/>
<path d="M738.71,474.3V437.11A5,5 0 0 1 743.71,432.11H744.91A5,5 0 0 1 749.91,437.11V474.3Z" fill="#f59e0b"/>
<path d="M803.79,474.3V296.49A5,5 0 0 1 808.79,291.49H809.99A5,5 0 0 1 814.99,296.49V474.3Z" fill="#ef4444"/>
<path d="M835.79,474.3V437.11A5,5 0 0 1 840.79,432.11H841.99A5,5 0 0 1 846.99,437.11V474.3Z" fill="#8b5cf6"/>
<path d="M868.88,474.3V324.61A5,5 0 0 1 873.88,319.61H875.08A5,5 0 0 1 880.08,324.61V474.3Z" fill="#10b981"/>
<path d="M884.88,474.3V465.24A5,5 0 0 1 889.88,460.24H891.08A5,5 0 0 1 896.08,465.24V474.3Z" fill="#ef4444"/>
<path d="M900.88,474.3V423.05A5,5 0 0 1 905.88,418.05H907.08A5,5 0 0 1 912.08,423.05V474.3Z" fill="#f59e0b"/>
<path d="M949.96,474.3V465.24A5,5 0 0 1 954.96,460.24H956.16A5,5 0 0 1 961.16,465.24V474.3Z" fill="#10b981"/>
<path d="M965.96,474.3V310.55A5,5 0 0 1 970.96,305.55H972.16A5,5 0 0 1 977.16,310.55V474.3Z" fill="#ef4444"/>
<path d="M981.96,474.3V465.24A5,5 0 0 1 986.96,460.24H988.16A5,5 0 0 1 993.16,465.24V474.3Z" fill="#f59e0b"/>
<path d="M997.96,474.3V451.18A5,5 0 0 1 1002.96,446.18H1004.16A5,5 0 0 1 1009.16,451.18V474.3Z" fill="#8b5cf6"/>
<line x1="455.0" y1="248.8" x2="455.0" y2="474.3" stroke="#d3d5d8"/>
<line x1="449.0" y1="474.3" x2="1022.6" y2="474.3" stroke="#d3d5d8"/>
<line x1="449.0" y1="474.30" x2="455.0" y2="474.30" stroke="#d3d5d8"/>
<text x="445.5" y="479.30" text-anchor="end" font-size="14" fill="#6f7379" font-family="Liberation Sans, sans-serif">0</text>
<line x1="449.0" y1="418.05" x2="455.0" y2="418.05" stroke="#d3d5d8"/>
<text x="445.5" y="423.05" text-anchor="end" font-size="14" fill="#6f7379" font-family="Liberation Sans, sans-serif">4</text>
<line x1="449.0" y1="361.80" x2="455.0" y2="361.80" stroke="#d3d5d8"/>
<text x="445.5" y="366.80" text-anchor="end" font-size="14" fill="#6f7379" font-family="Liberation Sans, sans-serif">8</text>
<line x1="449.0" y1="305.55" x2="455.0" y2="305.55" stroke="#d3d5d8"/>
<text x="445.5" y="310.55" text-anchor="end" font-size="14" fill="#6f7379" font-family="Liberation Sans, sans-serif">12</text>
<line x1="449.0" y1="249.30" x2="455.0" y2="249.30" stroke="#d3d5d8"/>
<text x="445.5" y="254.30" text-anchor="end" font-size="14" fill="#6f7379" font-family="Liberation Sans, sans-serif">16</text>
<line x1="495.54" y1="474.3" x2="495.54" y2="480.3" stroke="#d3d5d8"/>
<text x="495.54" y="494.3" text-anchor="middle" font-size="14" letter-spacing="0.35" fill="#6f7379" font-family="Liberation Sans, sans-serif">02/15/2026</text>
<line x1="576.63" y1="474.3" x2="576.63" y2="480.3" stroke="#d3d5d8"/>
<text x="576.63" y="494.3" text-anchor="middle" font-size="14" letter-spacing="0.35" fill="#6f7379" font-family="Liberation Sans, sans-serif">02/16/2026</text>
<line x1="657.71" y1="474.3" x2="657.71" y2="480.3" stroke="#d3d5d8"/>
<text x="657.71" y="494.3" text-anchor="middle" font-size="14" letter-spacing="0.35" fill="#6f7379" font-family="Liberation Sans, sans-serif">02/17/2026</text>
<line x1="738.80" y1="474.3" x2="738.80" y2="480.3" stroke="#d3d5d8"/>
<text x="738.80" y="494.3" text-anchor="middle" font-size="14" letter-spacing="0.35" fill="#6f7379" font-family="Liberation Sans, sans-serif">02/18/2026</text>
<line x1="819.89" y1="474.3" x2="819.89" y2="480.3" stroke="#d3d5d8"/>
<text x="819.89" y="494.3" text-anchor="middle" font-size="14" letter-spacing="0.35" fill="#6f7379" font-family="Liberation Sans, sans-serif">02/19/2026</text>
<line x1="900.97" y1="474.3" x2="900.97" y2="480.3" stroke="#d3d5d8"/>
<text x="900.97" y="494.3" text-anchor="middle" font-size="14" letter-spacing="0.35" fill="#6f7379" font-family="Liberation Sans, sans-serif">02/20/2026</text>
<line x1="982.06" y1="474.3" x2="982.06" y2="480.3" stroke="#d3d5d8"/>
<text x="982.06" y="494.3" text-anchor="middle" font-size="14" letter-spacing="0.35" fill="#6f7379" font-family="Liberation Sans, sans-serif">02/21/2026</text>
<rect x="529.8" y="519" width="16" height="12" fill="#ef4444"/>
<text x="551.5" y="529.6" font-size="18" letter-spacing="0.55" fill="#ef4444" font-family="Liberation Sans, sans-serif">Absent</text>
<rect x="624" y="519" width="16" height="12" fill="#f59e0b"/>
<text x="645.6" y="529.6" font-size="18" letter-spacing="0.55" fill="#f59e0b" font-family="Liberation Sans, sans-serif">Late</text>
<rect x="694.8" y="519" width="16" height="12" fill="#8b5cf6"/>
<text x="716" y="529.6" font-size="18" letter-spacing="0.55" fill="#8b5cf6" font-family="Liberation Sans, sans-serif">Leave</text>
<rect x="778.4" y="519" width="16" height="12" fill="#10b981"/>
<text x="799.8" y="529.6" font-size="18" letter-spacing="0.55" fill="#10b981" font-family="Liberation Sans, sans-serif">Present</text>
<line x1="1235.4" y1="418.05" x2="1803.0" y2="418.05" stroke="#f3f4f6" stroke-dasharray="3 3"/>
<line x1="1235.4" y1="361.80" x2="1803.0" y2="361.80" stroke="#f3f4f6" stroke-dasharray="3 3"/>
<line x1="1235.4" y1="305.55" x2="1803.0" y2="305.55" stroke="#f3f4f6" stroke-dasharray="3 3"/>
<line x1="1235.4" y1="249.30" x2="1803.0" y2="249.30" stroke="#f3f4f6" stroke-dasharray="3 3"/>
<line x1="1287.00" y1="249.3" x2="1287.00" y2="474.3" stroke="#f3f4f6" stroke-dasharray="3 3"/>
<line x1="1390.20" y1="249.3" x2="1390.20" y2="474.3" stroke="#f3f4f6" stroke-dasharray="3 3"/>
<line x1="1493.40" y1="249.3" x2="1493.40" y2="474.3" stroke="#f3f4f6" stroke-dasharray="3 3"/>
<line x1="1596.60" y1="249.3" x2="1596.60" y2="474.3" stroke="#f3f4f6" stroke-dasharray="3 3"/>
<line x1="1699.80" y1="249.3" x2="1699.80" y2="474.3" stroke="#f3f4f6" stroke-dasharray="3 3"/>
<line x1="1803.00" y1="249.3" x2="1803.00" y2="474.3" stroke="#f3f4f6" stroke-dasharray="3 3"/>
<line x1="1235.4" y1="248.8" x2="1235.4" y2="474.3" stroke="#d3d5d8"/>
<line x1="1229.4" y1="474.3" x2="1803.0" y2="474.3" stroke="#d3d5d8"/>
<line x1="1229.4" y1="474.30" x2="1235.4" y2="474.30" stroke="#d3d5d8"/>
<text x="1225.9" y="479.30" text-anchor="end" font-size="14" letter-spacing="0.3" fill="#6f7379" font-family="Liberation Sans, sans-serif">0</text>
<line x1="1229.4" y1="418.05" x2="1235.4" y2="418.05" stroke="#d3d5d8"/>
<text x="1225.9" y="423.05" text-anchor="end" font-size="14" letter-spacing="0.3" fill="#6f7379" font-family="Liberation Sans, sans-serif">60</text>
<line x1="1229.4" y1="361.80" x2="1235.4" y2="361.80" stroke="#d3d5d8"/>
<text x="1225.9" y="366.80" text-anchor="end" font-size="14" letter-spacing="0.3" fill="#6f7379" font-family="Liberation Sans, sans-serif">120</text>
<line x1="1229.4" y1="305.55" x2="1235.4" y2="305.55" stroke="#d3d5d8"/>
<text x="1225.9" y="310.55" text-anchor="end" font-size="14" letter-spacing="0.3" fill="#6f7379" font-family="Liberation Sans, sans-serif">180</text>
<line x1="1229.4" y1="249.30" x2="1235.4" y2="249.30" stroke="#d3d5d8"/>
<text x="1225.9" y="254.30" text-anchor="end" font-size="14" letter-spacing="0.3" fill="#6f7379" font-family="Liberation Sans, sans-serif">240</text>
<line x1="1287.00" y1="474.3" x2="1287.00" y2="480.3" stroke="#d3d5d8"/>
<text x="1287.00" y="494.3" text-anchor="middle" font-size="14" letter-spacing="0.45" fill="#6f7379" font-family="Liberation Sans, sans-serif">Apr 2025</text>
<line x1="1390.20" y1="474.3" x2="1390.20" y2="480.3" stroke="#d3d5d8"/>
<text x="1390.20" y="494.3" text-anchor="middle" font-size="14" letter-spacing="0.45" fill="#6f7379" font-family="Liberation Sans, sans-serif">Jun 2025</text>
<line x1="1493.40" y1="474.3" x2="1493.40" y2="480.3" stroke="#d3d5d8"/>
<text x="1493.40" y="494.3" text-anchor="middle" font-size="14" letter-spacing="0.45" fill="#6f7379" font-family="Liberation Sans, sans-serif">Aug 2025</text>
<line x1="1596.60" y1="474.3" x2="1596.60" y2="480.3" stroke="#d3d5d8"/>
<text x="1596.60" y="494.3" text-anchor="middle" font-size="14" letter-spacing="0.45" fill="#6f7379" font-family="Liberation Sans, sans-serif">Oct 2025</text>
<line x1="1699.80" y1="474.3" x2="1699.80" y2="480.3" stroke="#d3d5d8"/>
<text x="1699.80" y="494.3" text-anchor="middle" font-size="14" letter-spacing="0.45" fill="#6f7379" font-family="Liberation Sans, sans-serif">Dec 2025</text>
<line x1="1803.00" y1="474.3" x2="1803.00" y2="480.3" stroke="#d3d5d8"/>
<text x="1803.00" y="494.3" text-anchor="middle" font-size="14" letter-spacing="0.45" fill="#6f7379" font-family="Liberation Sans, sans-serif">Feb 2026</text>
<line x1="1235.4" y1="474.3" x2="1699.8000000000002" y2="474.3" stroke="#e0c39c" stroke-width="3"/>
<path d="M1699.80,474.30C1717.00,474.30,1734.20,465.86,1751.40,448.99C1768.60,432.11,1785.80,392.27,1803.00,352.43" fill="none" stroke="#ef4444" stroke-width="2"/>
<path d="M1699.80,474.30C1717.00,474.30,1734.20,267.11,1751.40,267.11C1768.60,267.11,1785.80,317.27,1803.00,367.43" fill="none" stroke="#10b981" stroke-width="2"/>
<path d="M1699.80,474.30C1717.00,474.30,1734.20,429.77,1751.40,429.77C1768.60,429.77,1785.80,438.91,1803.00,448.05" fill="none" stroke="#f59e0b" stroke-width="2"/>
<circle cx="1751.40" cy="448.99" r="4.6" fill="#ef4444"/>
<circle cx="1803.00" cy="352.43" r="4.6" fill="#ef4444"/>
<circle cx="1751.40" cy="267.11" r="4.6" fill="#10b981"/>
<circle cx="1803.00" cy="367.43" r="4.6" fill="#10b981"/>
<circle cx="1235.40" cy="474.30" r="4.6" fill="#f59e0b"/>
<circle cx="1287.00" cy="474.30" r="4.6" fill="#f59e0b"/>
<circle cx="1338.60" cy="474.30" r="4.6" fill="#f59e0b"/>
<circle cx="1390.20" cy="474.30" r="4.6" fill="#f59e0b"/>
<circle cx="1441.80" cy="474.30" r="4.6" fill="#f59e0b"/>
<circle cx="1493.40" cy="474.30" r="4.6" fill="#f59e0b"/>
<circle cx="1545.00" cy="474.30" r="4.6" fill="#f59e0b"/>
<circle cx="1596.60" cy="474.30" r="4.6" fill="#f59e0b"/>
<circle cx="1648.20" cy="474.30" r="4.6" fill="#f59e0b"/>
<circle cx="1699.80" cy="474.30" r="4.6" fill="#f59e0b"/>
<circle cx="1751.40" cy="429.77" r="4.6" fill="#f59e0b"/>
<circle cx="1803.00" cy="448.05" r="4.6" fill="#f59e0b"/>
<path d="M1352.4,525.4h5.3M1363.1000000000001,525.4h5.3" stroke="#ef4444" stroke-width="2"/>
<circle cx="1360.4" cy="525.4" r="2.7" fill="none" stroke="#ef4444" stroke-width="2"/>
<text x="1374.3" y="529.6" font-size="18" letter-spacing="0.55" fill="#ef4444" font-family="Liberation Sans, sans-serif">Absent</text>
<path d="M1446.5,525.4h5.3M1457.2,525.4h5.3" stroke="#f59e0b" stroke-width="2"/>
<circle cx="1454.5" cy="525.4" r="2.7" fill="none" stroke="#f59e0b" stroke-width="2"/>
<text x="1468.3" y="529.6" font-size="18" letter-spacing="0.55" fill="#f59e0b" font-family="Liberation Sans, sans-serif">Late</text>
<path d="M1517.2,525.4h5.3M1527.9,525.4h5.3" stroke="#10b981" stroke-width="2"/>
<circle cx="1525.2" cy="525.4" r="2.7" fill="none" stroke="#10b981" stroke-width="2"/>
<text x="1539" y="529.6" font-size="18" letter-spacing="0.55" fill="#10b981" font-family="Liberation Sans, sans-serif">Present</text>
</svg>
</body></html>
